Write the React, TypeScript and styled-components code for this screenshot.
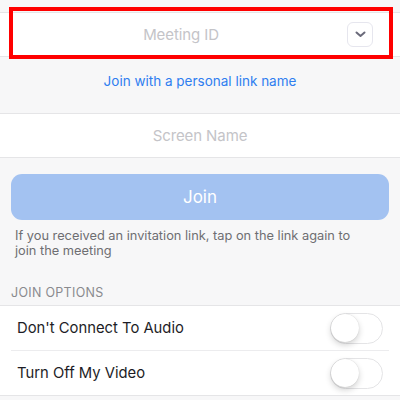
import styled, { createGlobalStyle } from 'styled-components';

const GlobalStyle = createGlobalStyle`
  html, body {
    margin: 0;
    padding: 0;
    background: #f7f7f8;
    font-family: Inter, "Liberation Sans", Arial, sans-serif;
    -webkit-font-smoothing: antialiased;
  }
`;

const Page = styled.div`
  width: 400px;
  height: 400px;
  overflow: hidden;
  padding-top: 12px;
  box-sizing: border-box;
  background: #f7f7f8;
`;

const FieldRow = styled.div<{ padRight?: number }>`
  position: relative;
  height: 43px;
  padding-right: ${({ padRight }) => padRight || 0}px;
  background: #fff;
  border-top: 1px solid #e5e5e7;
  border-bottom: 1px solid #e5e5e7;
  display: flex;
  align-items: center;
  justify-content: center;
`;

const Placeholder = styled.span<{ size: number }>`
  font-size: ${({ size }) => size}px;
  color: #c4c4c8;
  letter-spacing: -0.1px;
`;

const DropButton = styled.div`
  position: absolute;
  right: 27px;
  top: 9px;
  width: 24px;
  height: 23px;
  border: 1px solid #e6e6ee;
  border-radius: 6px;
  display: flex;
  align-items: center;
  justify-content: center;
`;

const Highlight = styled.div`
  position: absolute;
  left: 9px;
  width: 384px;
  top: -6px;
  height: 52px;
  border: 4px solid #ff0000;
  box-sizing: border-box;
  pointer-events: none;
`;

const LinkArea = styled.div`
  height: 48px;
  padding-bottom: 8px;
  display: flex;
  align-items: center;
  justify-content: center;
`;

const LinkText = styled.span`
  font-size: 13.5px;
  color: #2f7ef0;
`;

const JoinButton = styled.button`
  display: block;
  margin: 16px 11px 0;
  width: 378px;
  height: 46px;
  border: none;
  border-radius: 11px;
  background: #a3c2f1;
  color: #fff;
  font-family: inherit;
  font-size: 17px;
`;

const Note = styled.p`
  margin: 8px 40px 0 15px;
  font-size: 12.8px;
  line-height: 15px;
  color: #6e6e72;
`;

const SectionTitle = styled.div`
  margin-top: 27px;
  padding: 0 11px 4px;
  font-size: 12.5px;
  letter-spacing: 0.3px;
  color: #8a8a8e;
  line-height: 16px;
`;

const OptionList = styled.div`
  background: #fff;
  border-top: 1px solid #e5e5e7;
  border-bottom: 1px solid #e5e5e7;
`;

const OptionRow = styled.div<{ divider?: boolean }>`
  height: 44px;
  margin: 0 11px;
  padding: 0 6px;
  display: flex;
  align-items: center;
  justify-content: space-between;
  border-top: ${({ divider }) => (divider ? '1px solid #ececee' : 'none')};
`;

const OptionLabel = styled.span`
  font-size: 14.8px;
  color: #1d1d26;
`;

const Switch = styled.div`
  width: 53px;
  height: 31px;
  box-sizing: border-box;
  border: 1.5px solid #e4e4e6;
  border-radius: 16px;
  background: #fff;
  position: relative;
`;

const Knob = styled.div`
  position: absolute;
  left: 0;
  top: 0;
  width: 28px;
  height: 28px;
  border-radius: 50%;
  background: #fff;
  box-shadow: 0 3px 6px rgba(0, 0, 0, 0.18), 0 0 1px rgba(0, 0, 0, 0.2);
`;

const Chevron = () => (
  <svg width="11" height="7" viewBox="0 0 11 7">
    <path d="M1.5 1.5 L5.5 5 L9.5 1.5" fill="none" stroke="#6a6a7a" strokeWidth="2" strokeLinecap="round" strokeLinejoin="round" />
  </svg>
);

const options = ["Don't Connect To Audio", 'Turn Off My Video'];

export default function App() {
  return (
    <Page>
      <GlobalStyle />
      <FieldRow padRight={38}>
        <Placeholder size={15}>Meeting ID</Placeholder>
        <DropButton>
          <Chevron />
        </DropButton>
        <Highlight />
      </FieldRow>
      <LinkArea>
        <LinkText>Join with a personal link name</LinkText>
      </LinkArea>
      <FieldRow>
        <Placeholder size={15}>Screen Name</Placeholder>
      </FieldRow>
      <JoinButton>Join</JoinButton>
      <Note>If you received an invitation link, tap on the link again to join the meeting</Note>
      <SectionTitle>JOIN OPTIONS</SectionTitle>
      <OptionList>
        {options.map((label, i) => (
          <OptionRow key={label} divider={i > 0}>
            <OptionLabel>{label}</OptionLabel>
            <Switch>
              <Knob />
            </Switch>
          </OptionRow>
        ))}
      </OptionList>
    </Page>
  );
}
